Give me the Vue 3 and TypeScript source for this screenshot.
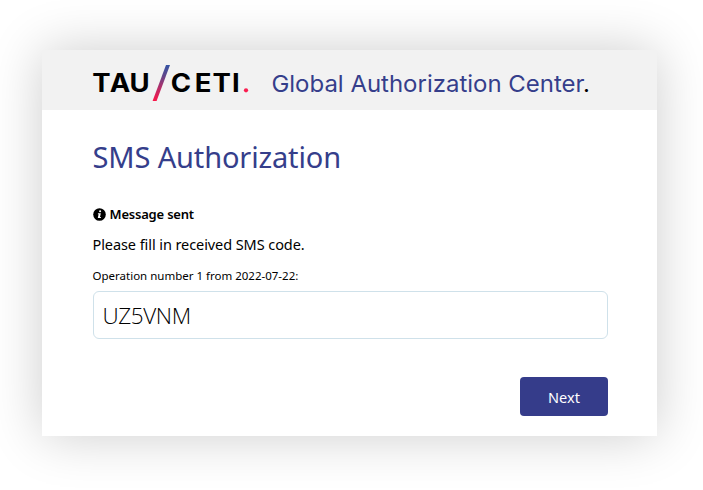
<script setup lang="ts">
import { ref } from 'vue'

const code = ref<string>('UZ5VNM')
const operation = { number: 1, date: '2022-07-22' }
</script>

<template>
  <main class="page">
    <form class="card" @submit.prevent>
      <header class="header">
        <svg class="logo" width="158" height="40" viewBox="0 0 158 40" role="img" aria-label="TAU/CETI">
          <defs>
            <linearGradient id="slash" x1="0" y1="0" x2="0" y2="1">
              <stop offset="0" stop-color="#3454a4" />
              <stop offset="0.3" stop-color="#614689" />
              <stop offset="0.7" stop-color="#c62862" />
              <stop offset="1" stop-color="#fa1648" />
            </linearGradient>
          </defs>
          <g transform="scale(1.1 1)">
            <text class="wordmark" x="-0.8 15.2 33.2" y="29.4">TAU</text>
            <text class="wordmark" x="70.6 92.6 108.6 126.4" y="29.4">CETI</text>
          </g>
          <path d="M73 2H77L63.6 38H59.6Z" fill="url(#slash)" />
          <circle cx="153" cy="27.3" r="2.1" fill="#fa1e50" />
        </svg>
        <svg class="brand" width="330" height="40" viewBox="0 0 330 40">
          <text class="brand-text" x="-0.6" y="29.2" textLength="318.6" lengthAdjust="spacingAndGlyphs">Global Authorization Center<tspan fill="#000">.</tspan></text>
        </svg>
      </header>
      <section class="body">
        <h1 class="title">SMS Authorization</h1>
        <div class="status">
          <svg class="info" width="13" height="13" viewBox="0 0 13 13">
            <circle cx="6.5" cy="6.5" r="6.3" />
            <circle cx="7.1" cy="3.2" r="1.05" fill="#fff" />
            <path d="M5 5.2H7.8L7 9.1H8L7.8 10.1H4.8L5.6 6.2H4.8Z" fill="#fff" />
          </svg>
          <strong class="status-text">Message sent</strong>
        </div>
        <p class="hint">Please fill in received SMS code.</p>
        <label class="label" for="code">Operation number {{ operation.number }} from {{ operation.date }}:</label>
        <input id="code" v-model="code" class="input" type="text" autocomplete="off" spellcheck="false" />
        <div class="actions">
          <button class="next" type="submit">Next</button>
        </div>
      </section>
    </form>
  </main>
</template>

<style>
body {
  background: #fff;
  overflow: hidden;
}
</style>

<style scoped>
.page {
  box-sizing: border-box;
  height: 490px;
  padding: 50px 46px 54px 42px;
  font-family: "Noto Sans", "Open Sans", sans-serif;
  color: #000;
}
.card {
  box-sizing: border-box;
  height: 386px;
  background: #fff;
  box-shadow: 0 0 50px rgba(0, 0, 0, 0.2);
}
.header {
  box-sizing: border-box;
  display: flex;
  height: 59.5px;
  padding: 13px 0 0 51px;
  background: #f2f2f2;
}
.logo,
.brand {
  flex: none;
}
.logo {
  overflow: visible;
}
.brand {
  margin-left: 21px;
  overflow: visible;
}
.wordmark {
  font: 700 25px Inter, sans-serif;
}
.brand-text {
  font: 400 23.5px Inter, sans-serif;
  fill: #353e8b;
}
.body {
  display: flex;
  flex-direction: column;
  padding: 25px 49px 0 50.5px;
}
.title {
  margin: 0;
  font-size: 29px;
  font-weight: 400;
  line-height: 44px;
  letter-spacing: -0.14px;
  white-space: nowrap;
  color: #353e8b;
}
.status {
  display: flex;
  align-items: center;
  gap: 4px;
  height: 20px;
  margin-top: 25px;
}
.info {
  margin-top: 2px;
}
.status-text {
  font-size: 13px;
  font-weight: 600;
  line-height: 20px;
  letter-spacing: -0.2px;
}
.hint {
  margin: 9px 0 0;
  font-size: 14.5px;
  line-height: 22px;
  letter-spacing: -0.08px;
}
.label {
  margin-top: 12px;
  font-size: 11.5px;
  line-height: 18px;
}
.input {
  box-sizing: border-box;
  width: 100%;
  height: 48px;
  margin-top: 6px;
  padding: 1px 9px 0;
  border: 1.5px solid #cfe1ea;
  border-radius: 6px;
  outline: none;
  background: #fff;
  color: #000;
  font: 300 22.5px "Open Sans", "Noto Sans", sans-serif;
  letter-spacing: -0.4px;
}
.actions {
  display: flex;
  justify-content: flex-end;
  margin-top: 38px;
}
.next {
  width: 88px;
  height: 39px;
  padding: 2px 0 0;
  border: 0;
  border-radius: 4px;
  background: #353c8a;
  color: #fff;
  font: 400 14.5px/37px "Noto Sans", sans-serif;
}
</style>
